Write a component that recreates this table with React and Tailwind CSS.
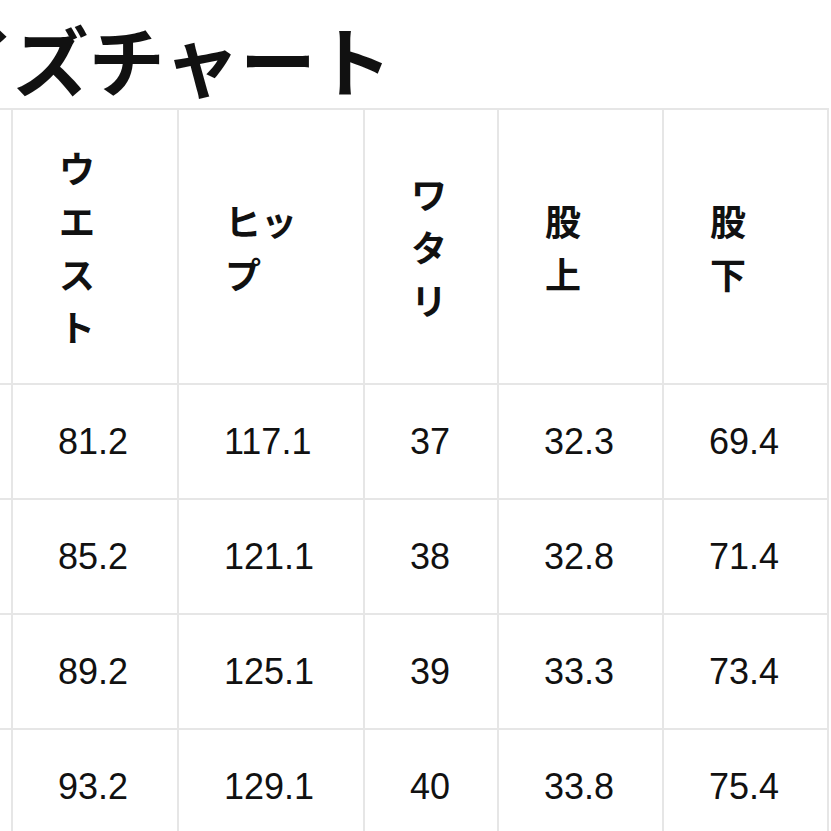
import React from 'react'

const headers = [
  [],
  ['ウ', 'エ', 'ス', 'ト'],
  ['ヒッ', 'プ'],
  ['ワ', 'タ', 'リ'],
  ['股', '上'],
  ['股', '下'],
]

const rows = [
  ['', '81.2', '117.1', '37', '32.3', '69.4'],
  ['', '85.2', '121.1', '38', '32.8', '71.4'],
  ['', '89.2', '125.1', '39', '33.3', '73.4'],
  ['', '93.2', '129.1', '40', '33.8', '75.4'],
]

const widths = ['w-[166px]', 'w-[166px]', 'w-[186px]', 'w-[134px]', 'w-[165px]', 'w-[165px]']

export default function App() {
  return (
    <div className="w-[831px] h-[831px] overflow-hidden bg-white text-[#111]">
      <div className="ml-[-155px] w-[1000px]">
        {/* Title */}
        <h2 className="pl-[18px] pt-[20px] h-[108px] text-[76px] leading-none font-bold font-['Noto_Sans_CJK_JP',sans-serif]">
          サイズチャート
        </h2>

        {/* Size table */}
        <table className="table-fixed border-collapse">
          <colgroup>
            {widths.map((w, i) => (
              <col key={i} className={w} />
            ))}
          </colgroup>
          <thead>
            <tr>
              {headers.map((lines, i) => (
                <th
                  key={i}
                  className="h-[275px] border-2 border-[#e6e6e6] pl-[46px] text-left align-middle font-bold text-[36px] leading-[53px] font-['Noto_Sans_CJK_JP',sans-serif]"
                >
                  {lines.map((l, j) => (
                    <div key={j}>{l}</div>
                  ))}
                </th>
              ))}
            </tr>
          </thead>
          <tbody>
            {rows.map((row, r) => (
              <tr key={r}>
                {row.map((v, i) => (
                  <td
                    key={i}
                    className="h-[115px] border-2 border-[#e6e6e6] pl-[45px] text-left align-middle text-[36px] font-['Liberation_Sans',Arial,sans-serif]"
                  >
                    {v}
                  </td>
                ))}
              </tr>
            ))}
          </tbody>
        </table>
      </div>
    </div>
  )
}
